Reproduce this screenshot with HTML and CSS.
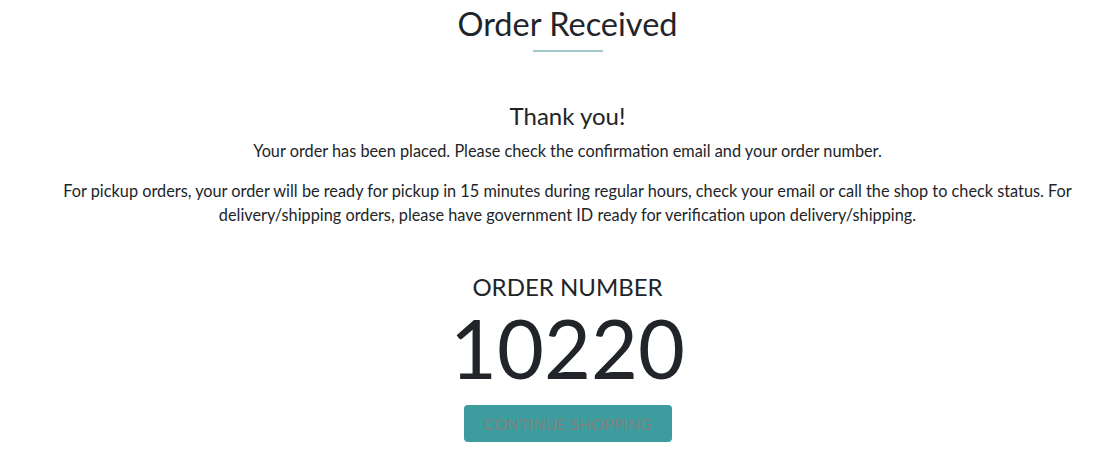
FILE: index.html
```html
<!DOCTYPE html>
<html lang="en">
<head>
    <meta charset="UTF-8">
    <meta name="viewport" content="width=device-width, initial-scale=1.0">
    <title>Order Received</title>
    <link rel="stylesheet" href="styles.css">
</head>
<body>
    <div class="container">
        <!-- page title -->
        <h1 class="page-title">Order Received</h1>
        <div class="title-line"></div>

        <div class="thanks">
            <h2>Thank you!</h2>
            <p>Your order has been placed. Please check the confirmation email and your order number.</p>
            <p>For pickup orders, your order will be ready for pickup in 15 minutes during regular hours, check your email or call the shop to check status. For delivery/shipping orders, please have government ID ready for verification upon delivery/shipping.</p>
        </div>

        <div class="order-box">
            <h3 class="order-label">ORDER NUMBER</h3>
            <div class="order-number">10220</div>
            <button class="continue-btn">CONTINUE SHOPPING</button>
        </div>
    </div>
</body>
</html>
```

FILE: styles.css
```css
body {
    margin: 0;
    padding: 0;
    font-family: 'Lato', 'Open Sans', sans-serif;
    color: #212529;
    background: #fff;
}

.container {
    padding: 0 15px 0 34px;
    text-align: center;
}

.page-title {
    font-size: 32.5px;
    font-weight: 400;
    margin: 0;
    padding-top: 4px;
    line-height: 1.2;
}

.title-line {
    width: 70px;
    height: 2px;
    background-color: #a3c9cc;
    margin: 7px auto 0;
}

.thanks {
    margin-top: 50px;
}

.thanks h2 {
    font-size: 24px;
    font-weight: 400;
    margin: 0 0 8px;
    line-height: 1.2;
}

.thanks p {
    font-size: 16.3px;
    line-height: 24px;
    margin: 0 0 16px;
}

.order-box {
    margin-top: 46px;
}

.order-label {
    font-size: 24px;
    font-weight: 400;
    margin: 0;
    line-height: 1.2;
}

.order-number {
    font-size: 81px;
    line-height: 1.2;
    margin-top: -3px;
}

.continue-btn {
    background-color: #3d9c9e;
    color: #808080;
    border: none;
    border-radius: 4px;
    width: 208px;
    height: 37px;
    font-family: inherit;
    font-size: 16px;
    margin-top: 9px;
    cursor: pointer;
}
```
